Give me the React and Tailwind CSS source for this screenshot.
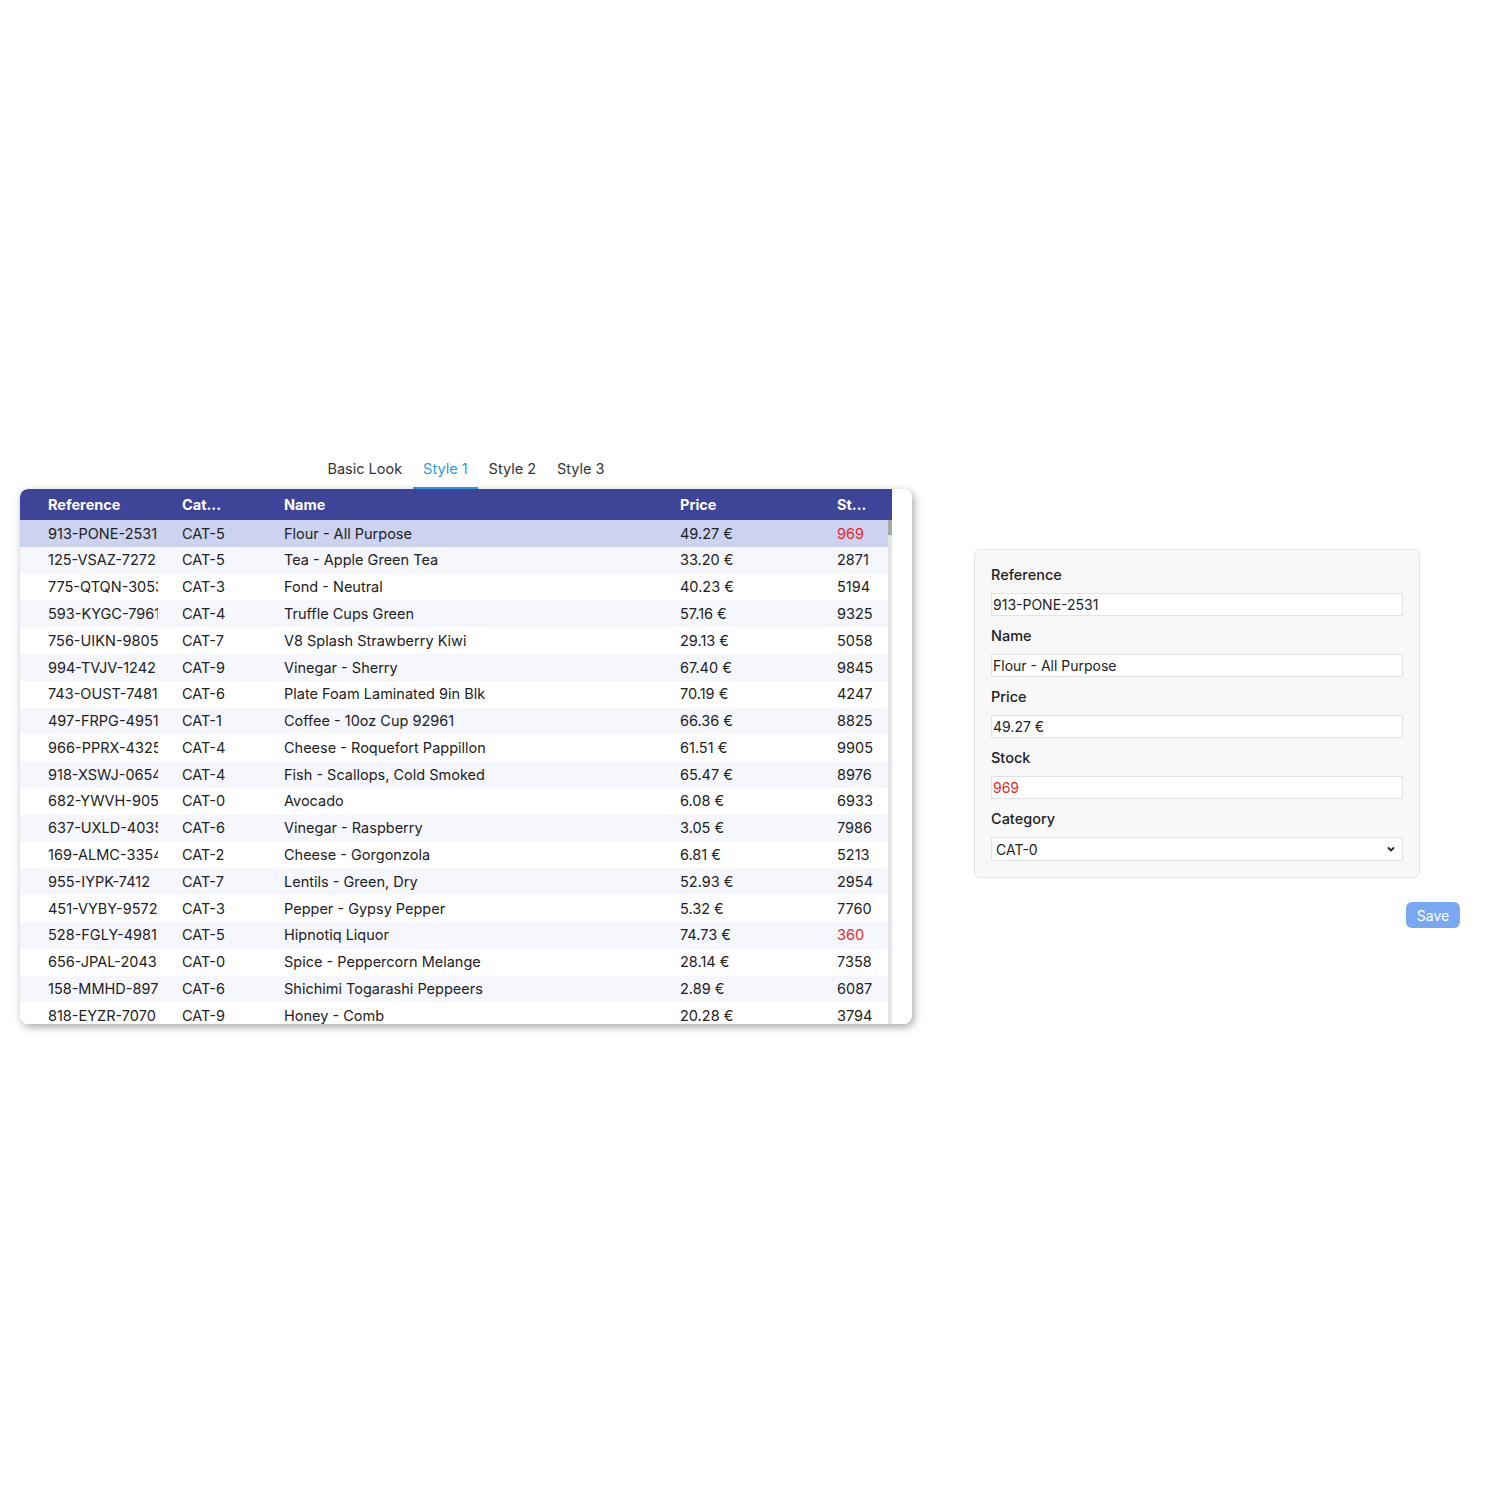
import React, { useState } from "react";

const rows = [
  ["913-PONE-2531", "CAT-5", "Flour - All Purpose", "49.27 €", 969],
  ["125-VSAZ-7272", "CAT-5", "Tea - Apple Green Tea", "33.20 €", 2871],
  ["775-QTQN-3053", "CAT-3", "Fond - Neutral", "40.23 €", 5194],
  ["593-KYGC-7961", "CAT-4", "Truffle Cups Green", "57.16 €", 9325],
  ["756-UIKN-9805", "CAT-7", "V8 Splash Strawberry Kiwi", "29.13 €", 5058],
  ["994-TVJV-1242", "CAT-9", "Vinegar - Sherry", "67.40 €", 9845],
  ["743-OUST-7481", "CAT-6", "Plate Foam Laminated 9in Blk", "70.19 €", 4247],
  ["497-FRPG-4951", "CAT-1", "Coffee - 10oz Cup 92961", "66.36 €", 8825],
  ["966-PPRX-4325", "CAT-4", "Cheese - Roquefort Pappillon", "61.51 €", 9905],
  ["918-XSWJ-0654", "CAT-4", "Fish - Scallops, Cold Smoked", "65.47 €", 8976],
  ["682-YWVH-9051", "CAT-0", "Avocado", "6.08 €", 6933],
  ["637-UXLD-4035", "CAT-6", "Vinegar - Raspberry", "3.05 €", 7986],
  ["169-ALMC-3354", "CAT-2", "Cheese - Gorgonzola", "6.81 €", 5213],
  ["955-IYPK-7412", "CAT-7", "Lentils - Green, Dry", "52.93 €", 2954],
  ["451-VYBY-9572", "CAT-3", "Pepper - Gypsy Pepper", "5.32 €", 7760],
  ["528-FGLY-4981", "CAT-5", "Hipnotiq Liquor", "74.73 €", 360],
  ["656-JPAL-2043", "CAT-0", "Spice - Peppercorn Melange", "28.14 €", 7358],
  ["158-MMHD-8977", "CAT-6", "Shichimi Togarashi Peppeers", "2.89 €", 6087],
  ["818-EYZR-7070", "CAT-9", "Honey - Comb", "20.28 €", 3794],
  ["402-KLMN-1187", "CAT-2", "Wine - Red, Merlot", "14.62 €", 4410],
];

const tabs = ["Basic Look", "Style 1", "Style 2", "Style 3"];

function Field({ label, children }) {
  return (
    <div className="mb-[9px] last:mb-0">
      <div className="h-[22px] leading-[22px] text-[14.5px] font-medium text-[#222]">{label}</div>
      <div className="mt-[7px]">{children}</div>
    </div>
  );
}

export default function App() {
  const [tab, setTab] = useState(1);
  const [sel, setSel] = useState(0);
  const item = rows[sel];

  return (
    <div
      className="w-[1500px] h-[1500px] bg-white pt-[450px] flex items-start text-[#222]"
      style={{ fontFamily: "Inter, 'Liberation Sans', sans-serif" }}
    >
      <div className="ml-[20px] w-[892px]">
        <div className="flex justify-center h-[39px]">
          {tabs.map((t, i) => (
            <button
              key={t}
              onClick={() => setTab(i)}
              className={
                "px-[10.5px] h-[39px] text-[14.5px] border-b-2 " +
                (i === tab ? "text-[#2a9be0] border-[#2a9be0]" : "text-[#333] border-transparent")
              }
            >
              {t}
            </button>
          ))}
        </div>
        <div className="h-[535px] bg-white rounded-lg shadow-[2px_3px_8px_rgba(0,0,0,0.35)] overflow-hidden pr-[20px]">
          <div className="h-[31px] bg-[#3e4497] flex items-center text-white font-bold text-[14.5px] rounded-tl-lg">
            <div className="w-[142px] pl-[28px]">Reference</div>
            <div className="w-[102px] pl-5">Cat...</div>
            <div className="w-[396px] pl-5">Name</div>
            <div className="w-[157px] pl-5">Price</div>
            <div className="w-[71px] pl-5">St...</div>
          </div>
          <div className="flex h-[504px]">
            <div className="w-[868px] overflow-hidden">
              {rows.map((r, i) => (
                <div
                  key={r[0]}
                  onClick={() => setSel(i)}
                  className={
                    "h-[26.8px] flex items-center text-[14.5px] whitespace-nowrap " +
                    (i === sel ? "bg-[#cbd3f1]" : i % 2 === 1 ? "bg-[#f6f6fd]" : "bg-white")
                  }
                >
                  <div className="w-[142px] pl-[28px] pr-[4px]">
                    <div className="overflow-hidden">{r[0]}</div>
                  </div>
                  <div className="w-[102px] pl-5 overflow-hidden">{r[1]}</div>
                  <div className="w-[396px] pl-5 overflow-hidden">{r[2]}</div>
                  <div className="w-[157px] pl-5 overflow-hidden">{r[3]}</div>
                  <div className={"w-[71px] pl-5 overflow-hidden " + (r[4] < 1000 ? "text-[#e8282b]" : "")}>
                    {r[4]}
                  </div>
                </div>
              ))}
            </div>
            <div className="w-[4px] bg-[#e4e4e4] flex flex-col">
              <div className="h-[15px] bg-[#a8a8a8]" />
            </div>
          </div>
        </div>
      </div>

      <div className="ml-[62px] mt-[99px] w-[486px] flex flex-col items-end">
        <div className="self-start w-[446px] bg-[#f8f8f9] border border-[#e6e6ea] rounded-md pt-[14px] pb-[16px] px-[16px]">
          <Field label="Reference">
            <div className="h-[23px] bg-white border border-[#e2e2e8] px-[1px] text-[14px] leading-[21px]">{item[0]}</div>
          </Field>
          <Field label="Name">
            <div className="h-[23px] bg-white border border-[#e2e2e8] px-[1px] text-[14px] leading-[21px]">{item[2]}</div>
          </Field>
          <Field label="Price">
            <div className="h-[23px] bg-white border border-[#e2e2e8] px-[1px] text-[14px] leading-[21px]">{item[3]}</div>
          </Field>
          <Field label="Stock">
            <div
              className={
                "h-[23px] bg-white border border-[#e2e2e8] px-[1px] text-[14px] leading-[21px] " +
                (item[4] < 1000 ? "text-[#e8282b]" : "")
              }
            >
              {item[4]}
            </div>
          </Field>
          <Field label="Category">
            <div className="h-[24px] bg-white border border-[#e2e2e8] pl-[4px] pr-[6px] text-[14px] flex items-center justify-between">
              <span>CAT-0</span>
              <svg width="10" height="10" viewBox="0 0 10 10">
                <path d="M2 3.5 L5 6.5 L8 3.5" fill="none" stroke="#222" strokeWidth="1.8" />
              </svg>
            </div>
          </Field>
        </div>
        <button className="mt-[24px] w-[54px] h-[26px] bg-[#78a8f2] text-white text-[14px] rounded-md">
          Save
        </button>
      </div>
    </div>
  );
}
